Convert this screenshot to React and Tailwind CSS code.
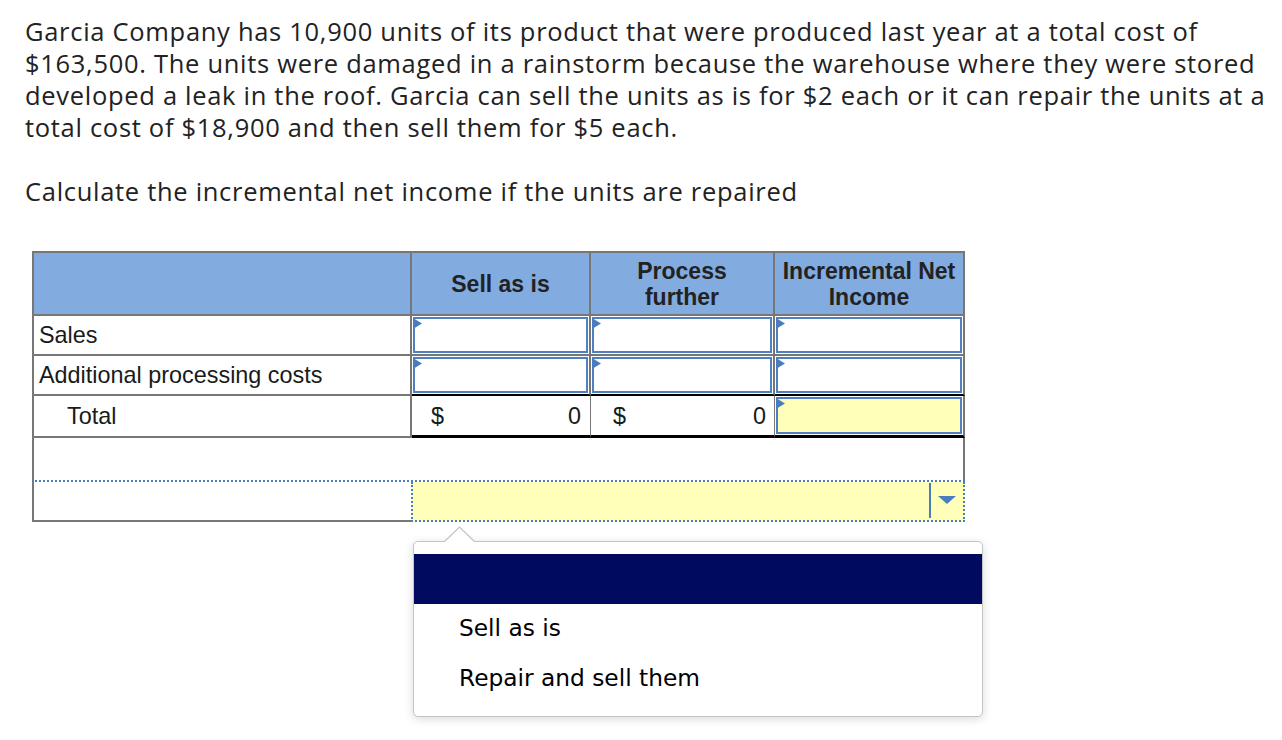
import React from "react";

const Marker = () => (
  <svg width="10" height="12" className="absolute -left-[2px] -top-[1px]">
    <polygon points="0,0 9,5.5 0,11" fill="#4a7dc0" />
  </svg>
);

const InputBox = ({ yellow }) => (
  <div className="h-full p-[1px]">
    <div
      className={`relative h-full border-2 border-[#4f80c1] ${
        yellow ? "bg-[#ffffb9]" : "bg-white"
      }`}
    >
      <Marker />
    </div>
  </div>
);

const App = () => {
  const cell = "border-r-2 border-[#777]";
  return (
    <div className="relative w-[1282px] h-[740px] bg-white overflow-hidden font-['Open_Sans',sans-serif] text-[#222]">
      <div className="pl-[25px] pt-[15px] text-[25.5px] leading-[32px] tracking-[0.7px]">
        <p className="whitespace-nowrap">
          <span className="block">
            Garcia Company has 10,900 units of its product that were produced last year at a total cost of
          </span>
          <span className="block">
            $163,500. The units were damaged in a rainstorm because the warehouse where they were stored
          </span>
          <span className="block">
            developed a leak in the roof. Garcia can sell the units as is for $2 each or it can repair the units at a
          </span>
          <span className="block">total cost of $18,900 and then sell them for $5 each.</span>
        </p>
        <p className="mt-[32px] whitespace-nowrap">Calculate the incremental net income if the units are repaired</p>
      </div>

      <div className="ml-[32px] mt-[44px] w-[933px] font-['Liberation_Sans',Arial,sans-serif] text-[23.4px] text-[#1a1a1a]">
        {/* header */}
        <div className="flex h-[65px] border-t-2 border-b-2 border-[#777] bg-[#82abe0] font-bold text-[#222] leading-[26px] text-[23px]">
          <div className={`w-[380px] border-l-2 ${cell}`} />
          <div className={`w-[179px] ${cell} flex items-center justify-center`}>Sell as is</div>
          <div className={`w-[184px] ${cell} flex items-center justify-center text-center`}>
            Process
            <br />
            further
          </div>
          <div className={`w-[190px] ${cell} flex items-center justify-center text-center`}>
            Incremental Net
            <br />
            Income
          </div>
        </div>

        {/* sales */}
        <div className="flex h-[40px] border-b-2 border-[#777]">
          <div className={`w-[380px] border-l-2 ${cell} flex items-center pl-[5px] pt-[2px]`}>Sales</div>
          <div className={`w-[179px] ${cell}`}>
            <InputBox />
          </div>
          <div className={`w-[184px] ${cell}`}>
            <InputBox />
          </div>
          <div className={`w-[190px] ${cell}`}>
            <InputBox />
          </div>
        </div>

        {/* additional */}
        <div className="flex h-[40px]">
          <div className={`w-[380px] border-l-2 border-b-2 ${cell} flex items-center pl-[5px] pt-[2px]`}>
            Additional processing costs
          </div>
          <div className={`w-[179px] ${cell} border-b-2 border-b-black`}>
            <InputBox />
          </div>
          <div className={`w-[184px] ${cell} border-b-2 border-b-black`}>
            <InputBox />
          </div>
          <div className={`w-[190px] ${cell} border-b-2 border-b-black`}>
            <InputBox />
          </div>
        </div>

        {/* total */}
        <div className="flex h-[42px]">
          <div className={`w-[380px] border-l-2 border-b-2 ${cell} flex items-center pl-[33px] pt-[2px]`}>Total</div>
          <div className="w-[179px] border-r border-[#777] border-b-[3px] border-b-black flex items-center justify-between pl-[19px] pr-[9px] pt-[2px]">
            <span>$</span>
            <span>0</span>
          </div>
          <div className="w-[184px] border-r border-[#777] border-b-[3px] border-b-black flex items-center justify-between pl-[22px] pr-[8px] pt-[2px]">
            <span>$</span>
            <span>0</span>
          </div>
          <div className={`w-[190px] ${cell} border-b-[3px] border-b-black`}>
            <InputBox yellow />
          </div>
        </div>

        {/* blank row */}
        <div className="h-[42px] border-l-2 border-r-2 border-[#777]" />

        {/* answer row */}
        <div className="flex h-[42px] border-t-2 border-dotted border-[#4a7dc0]">
          <div className="w-[379px] border-l-2 border-b-2 border-solid border-[#777]" />
          <div className="flex-1 flex border-l-2 border-r-2 border-b-2 border-dotted border-[#4a7dc0] bg-[#ffffb9]">
            <div className="flex-1" />
            <div className="w-[2px] mt-[1px] mb-[2px] bg-[#4a7dc0]" />
            <div className="w-[32px] flex items-start justify-center pt-[14px]">
              <svg width="18" height="9">
                <polygon points="0,0 18,0 9,8" fill="#4a7dc0" />
              </svg>
            </div>
          </div>
        </div>
      </div>

      {/* dropdown popup */}
      <div className="absolute left-[413px] top-[541px] w-[570px] h-[176px] bg-white border border-[#c4c4c4] rounded-[5px] shadow-[0_2px_10px_rgba(0,0,0,0.15)] pt-[12px] font-['DejaVu_Sans',Verdana,sans-serif] text-[23.3px] text-black">
        <div className="h-[50px] bg-[#000b60]" />
        <div className="h-[50px] flex items-center pl-[45px] pb-[2px]">Sell as is</div>
        <div className="h-[50px] flex items-center pl-[45px] pb-[2px]">Repair and sell them</div>
      </div>
      <svg width="32" height="17" className="absolute left-[444px] top-[526px]">
        <polygon points="1,16 15.5,1 30,16" fill="white" />
        <polyline points="1,15 15.5,1 30,15" fill="none" stroke="#c4c4c4" strokeWidth="1.2" />
      </svg>
    </div>
  );
};

export default App;
